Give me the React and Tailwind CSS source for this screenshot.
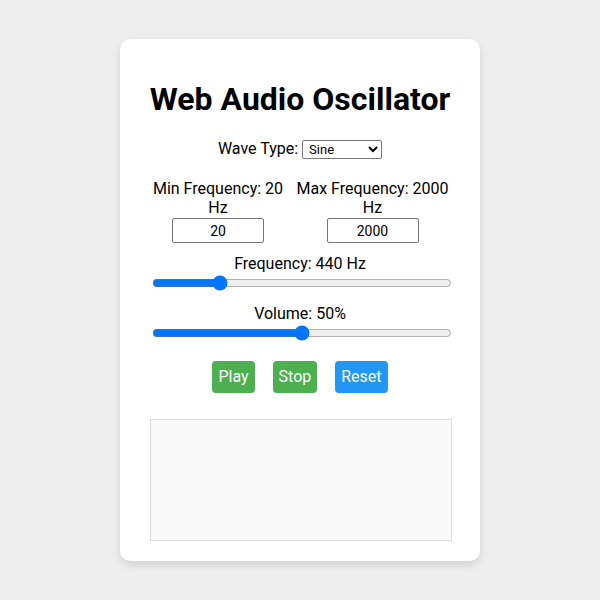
import { useState } from "react";

export default function App() {
  const [wave, setWave] = useState("sine");
  const [minFreq, setMinFreq] = useState(20);
  const [maxFreq, setMaxFreq] = useState(2000);
  const [freq, setFreq] = useState(440);
  const [volume, setVolume] = useState(50);

  const reset = () => {
    setWave("sine");
    setMinFreq(20);
    setMaxFreq(2000);
    setFreq(440);
    setVolume(50);
  };

  return (
    <div className="min-h-screen flex justify-center items-center bg-[#eeeeee] font-['Roboto','Liberation_Sans',sans-serif] text-black">
      <div className="w-[360px] bg-white rounded-[10px] shadow-[0_4px_8px_rgba(0,0,0,0.12)] px-[30px] pt-[30px] pb-[20px] flex flex-col items-center">
        <h1 className="mt-[12px] h-[37px] leading-[37px] text-[32px] font-bold whitespace-nowrap">
          Web Audio Oscillator
        </h1>

        <div className="mt-[21px] h-[20px] flex items-center gap-[4px] text-[16px]">
          <label>Wave Type:</label>
          <select
            value={wave}
            onChange={(e) => setWave(e.target.value)}
            className="w-[80px] h-[19px] border border-[#767676] rounded-[2px] text-[13px] px-[2px] bg-white"
          >
            <option value="sine">Sine</option>
            <option value="square">Square</option>
            <option value="sawtooth">Sawtooth</option>
            <option value="triangle">Triangle</option>
          </select>
        </div>

        <div className="mt-[20px] w-full flex gap-[10px] text-[16px] leading-[19px] text-center">
          <div className="w-[136px] flex flex-col items-center">
            <label>Min Frequency: {minFreq} Hz</label>
            <input
              type="number"
              value={minFreq}
              onChange={(e) => setMinFreq(e.target.value)}
              className="mt-[1px] w-[92px] h-[25px] border border-[#767676] rounded-[2px] text-center text-[14px] [appearance:textfield] [&::-webkit-inner-spin-button]:appearance-none"
            />
          </div>
          <div className="w-[153px] flex flex-col items-center">
            <label>Max Frequency: {maxFreq} Hz</label>
            <input
              type="number"
              value={maxFreq}
              onChange={(e) => setMaxFreq(e.target.value)}
              className="mt-[1px] w-[92px] h-[25px] border border-[#767676] rounded-[2px] text-center text-[14px] [appearance:textfield] [&::-webkit-inner-spin-button]:appearance-none"
            />
          </div>
        </div>

        <label className="mt-[11px] h-[19px] leading-[19px] text-[16px]">
          Frequency: {freq} Hz
        </label>
        <input
          type="range"
          min={minFreq}
          max={maxFreq}
          value={freq}
          onChange={(e) => setFreq(e.target.value)}
          className="self-start ml-[2px] mt-[2px] w-full h-[16px] accent-[#0075ff]"
        />

        <label className="mt-[13px] h-[19px] leading-[19px] text-[16px]">
          Volume: {volume}%
        </label>
        <input
          type="range"
          min={0}
          max={100}
          value={volume}
          onChange={(e) => setVolume(e.target.value)}
          className="self-start ml-[2px] mt-[2px] w-full h-[16px] accent-[#0075ff]"
        />

        <div className="mt-[20px] flex gap-[18px]">
          <button className="h-[32px] px-[6px] rounded-[4px] bg-[#4caf50] text-white text-[16px]">
            Play
          </button>
          <button className="h-[32px] px-[6px] rounded-[4px] bg-[#4caf50] text-white text-[16px]">
            Stop
          </button>
          <button
            onClick={reset}
            className="h-[32px] px-[6px] rounded-[4px] bg-[#2196f3] text-white text-[16px]"
          >
            Reset
          </button>
        </div>

        <canvas
          width={300}
          height={120}
          className="self-start mt-[26px] w-[302px] h-[122px] bg-[#f9f9f9] border border-[#dddddd]"
        />
      </div>
    </div>
  );
}
